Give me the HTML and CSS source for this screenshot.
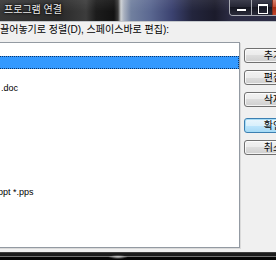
FILE: index.html
```html
<!DOCTYPE html>
<html lang="ko">
  <head>
    <meta charset="UTF-8" />
    <title>프로그램 연결</title>
    <link rel="stylesheet" href="styles.css">
  </head>
  <body>
    <div class="screen">
      <div class="window">
        <div class="titlebar">
          <span class="title">프로그램 연결</span>
          <div class="caption">
            <span class="cap min"></span>
            <span class="cap max"></span>
            <span class="cap close"></span>
          </div>
        </div>

        <div class="content">
          <div class="label">끌어놓기로 정렬(D), 스페이스바로 편집):</div>
          <div class="main">
            <ul class="list">
              <li class="row"></li>
              <li class="row selected"></li>
              <li class="row"></li>
              <li class="row"><span class="ext doc">.doc</span></li>
              <li class="row"></li>
              <li class="row"></li>
              <li class="row"></li>
              <li class="row"></li>
              <li class="row"></li>
              <li class="row"></li>
              <li class="row"></li>
              <li class="row"><span class="ext pps">ppt *.pps</span></li>
            </ul>
            <div class="buttons">
              <button class="btn">추가</button>
              <button class="btn">편집</button>
              <button class="btn">삭제</button>
              <button class="btn default ok">확인</button>
              <button class="btn">취소</button>
            </div>
          </div>
        </div>
      </div>
      <div class="taskbar"></div>
    </div>
  </body>
</html>
```

FILE: styles.css
```css
* {
  margin: 0;
  padding: 0;
  box-sizing: border-box;
}
html,
body {
  width: 276px;
  height: 260px;
  overflow: hidden;
  background: #f0f0f0;
  font-family: "Liberation Sans", "Noto Sans CJK KR", sans-serif;
}
.screen {
  display: flex;
  flex-direction: column;
  height: 260px;
}
.window {
  flex: 1;
  display: flex;
  flex-direction: column;
  min-height: 0;
}
/* glass title bar */
.titlebar {
  height: 22px;
  display: flex;
  align-items: flex-start;
  overflow: hidden;
  border-bottom: 1px solid #c4c8cc;
  background: linear-gradient(
      to bottom,
      rgba(255, 255, 255, 0.07),
      rgba(255, 255, 255, 0) 55%
    ),
    linear-gradient(
      to right,
      #383838 0,
      #2a2a2a 60px,
      #3c3c3c 86px,
      #1c1c1c 96px,
      #121212 114px,
      #3a3a3a 118px,
      #cdd1d4 121px,
      #a8b0bf 124px,
      #71809f 131px,
      #5b6891 150px,
      #3b4270 172px,
      #23253d 192px,
      #1b1b2b 215px,
      #2c2c44 231px
    );
}
.title {
  padding-left: 4px;
  font-size: 10px;
  line-height: 20px;
  color: #ececec;
  text-shadow: 0 0 3px #000, 0 0 2px #000;
  white-space: nowrap;
}
.caption {
  margin-left: auto;
  margin-right: -41px;
  display: flex;
  flex-shrink: 0;
  height: 16px;
  border: 1px solid #a9abb3;
  border-top: none;
  border-radius: 0 0 4px 4px;
  overflow: hidden;
}
.cap {
  position: relative;
  height: 100%;
  background: linear-gradient(#3c3d4c, #232432 50%, #161722 50%, #2a2b3a);
}
.min {
  width: 22px;
  border-right: 1px solid #a9abb3;
}
.max {
  width: 21px;
  border-right: 1px solid #7a3020;
}
.close {
  width: 43px;
  background: linear-gradient(#d7826e, #c0452b 50%, #a82a10 50%, #c0452b);
}
.min::after {
  content: "";
  position: absolute;
  left: 7px;
  top: 9px;
  width: 9px;
  height: 2px;
  background: #fff;
  box-shadow: 0 0 1px #000;
}
.max::after {
  content: "";
  position: absolute;
  left: 6px;
  top: 4px;
  width: 8px;
  height: 7px;
  border: 1px solid #fff;
  border-top-width: 2px;
  box-shadow: 0 0 1px #000;
}
.content {
  flex: 1;
  display: flex;
  flex-direction: column;
  padding: 2px 0 4px;
  min-height: 0;
}
.label {
  height: 12px;
  font-size: 10px;
  line-height: 12px;
  color: #000;
  white-space: nowrap;
  margin-bottom: 6px;
}
.main {
  flex: 1;
  display: flex;
  min-height: 0;
}
.list {
  list-style: none;
  flex: 0 0 242px;
  margin-left: -2px;
  background: #fff;
  border: 1px solid #939aa2;
  box-shadow: 1px 1px 0 #dadada;
  overflow: hidden;
  padding-top: 0;
}
.row {
  height: 13px;
  font-size: 9px;
  line-height: 13px;
  color: #000;
  white-space: nowrap;
}
.row.selected {
  background: #3399ff;
  outline: 1px dotted #0d3468;
  outline-offset: -1px;
}
.ext {
  display: inline-block;
}
.doc {
  margin-left: 2px;
}
.pps {
  margin-left: -1px;
}
.buttons {
  display: flex;
  flex-direction: column;
  gap: 7px;
  margin-left: 4px;
  padding-top: 6px;
  flex-shrink: 0;
}
.btn {
  width: 58px;
  height: 15px;
  border: 1px solid #707070;
  border-radius: 3px;
  background: linear-gradient(#f2f2f2, #ebebeb 50%, #dddddd 50%, #cfcfcf);
  box-shadow: inset 0 0 0 1px rgba(255, 255, 255, 0.75);
  font-family: "Liberation Sans", "Noto Sans CJK KR", sans-serif;
  font-size: 10px;
  line-height: 13px;
  color: #000;
  text-align: center;
}
.btn.default {
  border-color: #3c7fb1;
  background: linear-gradient(#eaf6fd, #d9f0fc 50%, #bee6fd 50%, #a7d9f5);
  box-shadow: inset 0 0 0 1px #a6dcf6;
}
.ok {
  margin-top: 4px;
}
.taskbar {
  height: 8px;
  background: radial-gradient(
      ellipse 10px 2px at 118px 5px,
      rgba(255, 255, 255, 0.7),
      transparent
    ),
    linear-gradient(
      to bottom,
      #3e3e3e 0,
      #3e3e3e 1px,
      #1b1b1b 1px,
      #1b1b1b 4px,
      #707070 4px,
      #707070 5px,
      #050505 5px
    );
}
```
